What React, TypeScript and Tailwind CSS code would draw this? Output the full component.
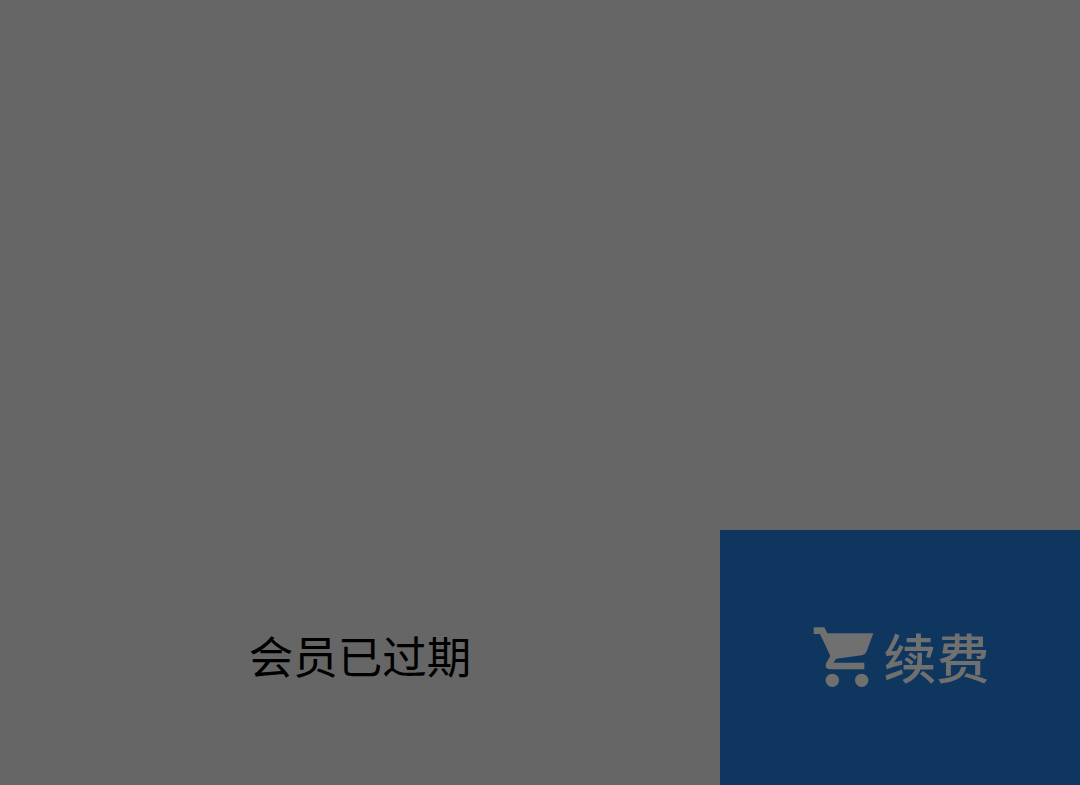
export default function App() {
  return (
    <div className="flex h-[785px] w-[1080px] flex-col overflow-hidden bg-[#666666] font-['Noto_Sans_CJK_SC',sans-serif]">
      {/* Empty content area under the dimming layer */}
      <div className="flex-1" />

      {/* Bottom bar */}
      <div className="flex h-[255px]">
        <div className="flex flex-1 items-center justify-center pb-[4px]">
          <span className="text-[44.5px] leading-none text-black">会员已过期</span>
        </div>
        <div className="flex w-[360px] items-center justify-center bg-[#0f365f] pb-[2px] text-[#707070]">
          <svg viewBox="60 45 195 195" className="mr-[8px] mt-[2px] h-[65px] w-[65px]" fill="currentColor">
            <path d="M68 52H100L109 70H247L227 124Q223 134 212 136L136 146L127 158H220V178H122Q98 178 106 158L118 138L87 72H68Z" />
            <circle cx="124" cy="211" r="20" />
            <circle cx="212" cy="211" r="20" />
          </svg>
          <span className="text-[53px] font-medium leading-none">续费</span>
        </div>
      </div>
    </div>
  );
}
